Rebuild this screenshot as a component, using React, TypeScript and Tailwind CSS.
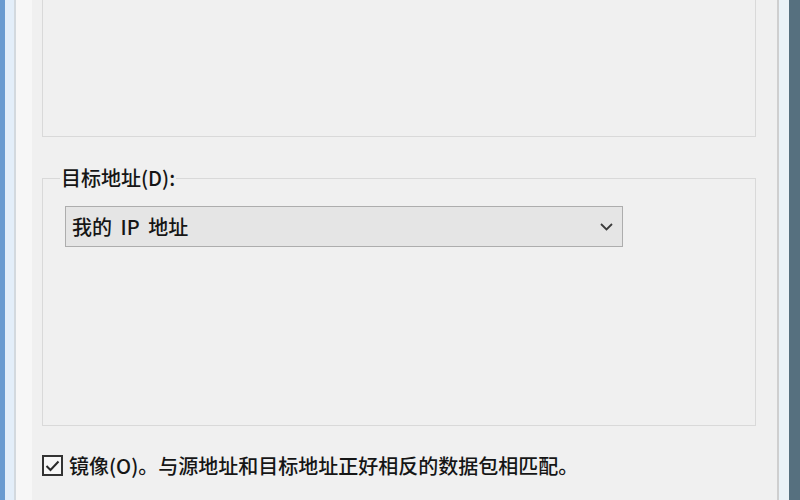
import React, { useState } from "react";

const font = { fontFamily: '"Noto Sans CJK SC", "Noto Sans", sans-serif' };

export default function App() {
  const [mirror, setMirror] = useState(true);

  return (
    <div className="w-[800px] h-[500px] flex overflow-hidden bg-[#f0f0f0] text-[#161616]" style={font}>
      {/* left window frame */}
      <div className="w-[5px] bg-[#6a9bd0]" />
      <div className="w-[9px] bg-[#e3eef9]" />
      <div className="w-[2px] bg-[#d3d9de]" />
      <div className="w-[16px] bg-[#f7f7f7]" />

      {/* dialog body */}
      <div className="w-[745px] pl-[10px] pr-[21px] flex flex-col">
        {/* upper group box, top cut off */}
        <div className="h-[137px] border-x border-b border-[#d9d9d9]" />

        {/* target address group */}
        <fieldset className="mt-[31px] h-[258px] border border-[#d9d9d9] px-0">
          <legend className="ml-[17px] px-[1px] text-[20px] leading-[20px] font-medium">目标地址(D):</legend>
          <div className="mt-[18px] ml-[22px] w-[558px] h-[41px] bg-[#e5e5e5] border border-[#adadad] flex items-center justify-between pl-[6px] pr-[9px]">
            <span className="text-[20px] leading-none whitespace-pre font-medium [word-spacing:4px]">我的 IP 地址</span>
            <svg width="13" height="8" viewBox="0 0 13 8" className="mt-[1px]">
              <polyline points="1,1 6.5,6.5 12,1" fill="none" stroke="#3c3c3c" strokeWidth="1.8" />
            </svg>
          </div>
        </fieldset>

        {/* mirror checkbox */}
        <label className="mt-[29px] flex items-center gap-[6px] cursor-pointer select-none">
          <span
            onClick={() => setMirror(!mirror)}
            className="w-[21px] h-[21px] border-2 border-[#333333] bg-[#f7f7f7] flex items-center justify-center"
          >
            {mirror && (
              <svg width="15" height="12" viewBox="0 0 15 12">
                <polyline points="1.5,6 5.5,10 13.5,1.5" fill="none" stroke="#2a2a2a" strokeWidth="2" />
              </svg>
            )}
          </span>
          <span className="text-[20px] leading-none font-medium">镜像(O)。与源地址和目标地址正好相反的数据包相匹配。</span>
        </label>
      </div>

      {/* right window frame */}
      <div className="w-[2px] bg-[#cfcfcf]" />
      <div className="w-[10px] bg-[#eaf2f7]" />
      <div className="w-[11px] bg-[#56707f]" />
    </div>
  );
}
